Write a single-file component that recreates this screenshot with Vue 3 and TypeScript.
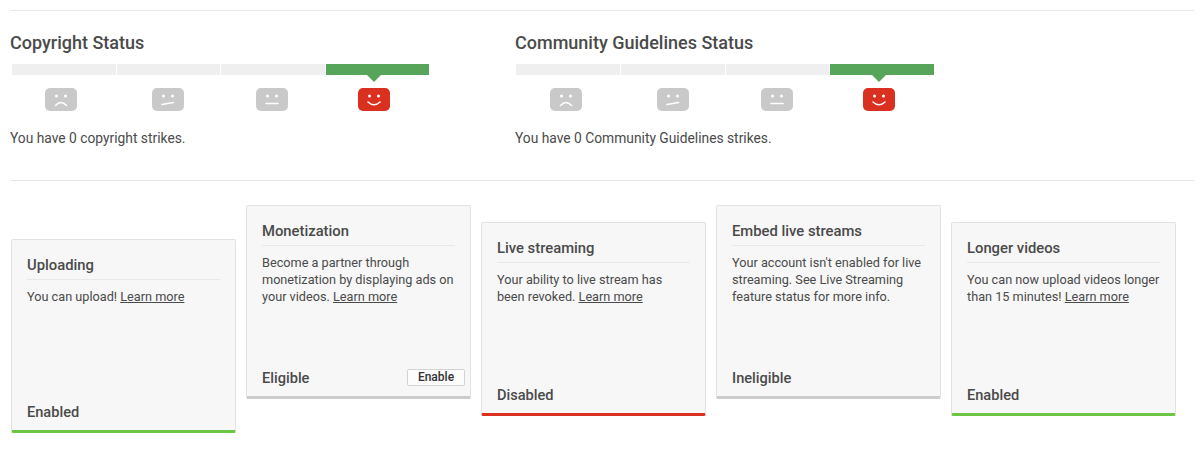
<script setup lang="ts">
interface Face { mouth: string; active?: boolean }
interface Panel { title: string; text: string; faces: Face[]; width: string }
interface Feature { title: string; text: string; link: boolean; status: string; tone: string; offset: string; action?: string }

const faces: Face[] = [
  { mouth: 'M10.5 17.5 Q16 11.5 21.5 17.5' },
  { mouth: 'M10 16.5 L21.5 14.5' },
  { mouth: 'M10 15.5 H22' },
  { mouth: 'M10 14 Q16 19.5 22 14', active: true },
]
const panels: Panel[] = [
  { title: 'Copyright Status', text: 'You have 0 copyright strikes.', faces, width: 'panel-a' },
  { title: 'Community Guidelines Status', text: 'You have 0 Community Guidelines strikes.', faces, width: 'panel-b' },
]
const features: Feature[] = [
  { title: 'Uploading', text: 'You can upload! ', link: true, status: 'Enabled', tone: 'green', offset: 'low' },
  { title: 'Monetization', text: 'Become a partner through monetization by displaying ads on your videos. ', link: true, status: 'Eligible', tone: 'gray', offset: 'high', action: 'Enable' },
  { title: 'Live streaming', text: 'Your ability to live stream has been revoked. ', link: true, status: 'Disabled', tone: 'red', offset: 'mid' },
  { title: 'Embed live streams', text: "Your account isn't enabled for live streaming. See Live Streaming feature status for more info.", link: false, status: 'Ineligible', tone: 'gray', offset: 'high' },
  { title: 'Longer videos', text: 'You can now upload videos longer than 15 minutes! ', link: true, status: 'Enabled', tone: 'green', offset: 'mid' },
]
</script>

<template>
  <main class="page">
    <section class="status-row">
      <div v-for="p in panels" :key="p.title" class="panel" :class="p.width">
        <h2 class="panel-title">{{ p.title }}</h2>
        <div class="meter">
          <div v-for="(f, i) in p.faces" :key="i" class="step" :class="[{ on: f.active }, 'pos-' + i]">
            <div class="bar"></div>
            <svg class="face" width="32" height="23" viewBox="0 0 32 23">
              <rect width="32" height="23" rx="5" :fill="f.active ? '#d9301f' : '#c9c9c9'" />
              <circle cx="11.5" cy="8" r="1.5" fill="#fff" />
              <circle cx="20.5" cy="8" r="1.5" fill="#fff" />
              <path :d="f.mouth" fill="none" stroke="#fff" stroke-width="1.6" stroke-linecap="round" />
            </svg>
          </div>
        </div>
        <p class="panel-text">{{ p.text }}</p>
      </div>
    </section>

    <section class="cards">
      <article v-for="c in features" :key="c.title" class="card" :class="[c.tone, c.offset]">
        <h3 class="card-title">{{ c.title }}</h3>
        <p class="card-text">{{ c.text }}<a v-if="c.link" class="learn">Learn more</a></p>
        <div class="card-foot">
          <span class="state">{{ c.status }}</span>
          <button v-if="c.action" class="enable" type="button">{{ c.action }}</button>
        </div>
      </article>
    </section>
  </main>
</template>

<style scoped>
.page {
  width: 1184px;
  margin-left: 10px;
  padding-top: 10px;
  font-family: Roboto, "Liberation Sans", sans-serif;
  color: #4a4a4a;
}
.status-row {
  display: flex;
  height: 171px;
  box-sizing: border-box;
  border-top: 1px solid #e6e6e6;
  border-bottom: 1px solid #e6e6e6;
}
.panel { box-sizing: border-box; width: 505px; }
.panel-title {
  margin: 20px 0 0;
  font-size: 18px;
  line-height: 24px;
  font-weight: 500;
  color: #4a4a4a;
}
.meter {
  display: flex;
  gap: 1px;
  margin: 9px 0 0 2px;
  width: 417px;
}
.panel-b .meter { margin-left: 1px; width: 418px; }
.step {
  position: relative;
  flex: 1;
  display: flex;
  flex-direction: column;
  align-items: center;
}
.bar { width: 100%; height: 11px; background: #efefef; }
.step.on .bar { background: #57a55a; }
.step.on::after {
  content: "";
  position: absolute;
  top: 11px;
  left: 50%;
  margin-left: -10px;
  border-left: 7px solid transparent;
  border-right: 7px solid transparent;
  border-top: 7px solid #57a55a;
}
.face { margin-top: 13px; display: block; }
.pos-0 .face { margin-right: 5px; }
.pos-1 .face { margin-right: 0; }
.pos-2 .face { margin-right: 2px; }
.pos-3 .face { margin-right: 6px; }
.panel-b .pos-0 .face { margin-right: 3px; }
.panel-b .pos-2 .face { margin-right: 0; }
.panel-text {
  margin: 17px 0 0;
  font-size: 13.8px;
  line-height: 20px;
  color: #4a4a4a;
}
.cards {
  display: flex;
  gap: 10px;
  margin: 24px 0 0 1px;
  align-items: flex-start;
}
.card {
  box-sizing: border-box;
  width: 225px;
  height: 194px;
  padding: 15px 15px 0;
  display: flex;
  flex-direction: column;
  background: #f7f7f7;
  border: 1px solid #e2e2e2;
  border-bottom-width: 3px;
  border-radius: 2px;
}
.card.low { margin-top: 34px; }
.card.mid { margin-top: 17px; }
.card.high { margin-top: 0; }
.card.green { border-bottom-color: #6cc644; }
.card.gray { border-bottom-color: #cccccc; }
.card.red { border-bottom-color: #d9301f; }
.card-title {
  margin: 0;
  padding-bottom: 3px;
  font-size: 14.8px;
  line-height: 21px;
  font-weight: 500;
  color: #4a4a4a;
  border-bottom: 1px solid #e8e8e8;
}
.card-text {
  margin: 8px 0 0;
  font-size: 12.7px;
  line-height: 17px;
  color: #4a4a4a;
}
.learn { text-decoration: underline; color: #4a4a4a; }
.card-foot {
  margin-top: auto;
  height: 28px;
  display: flex;
  justify-content: space-between;
  align-items: flex-start;
  margin-right: -10px;
}
.state {
  font-size: 14.6px;
  line-height: 21px;
  font-weight: 500;
  color: #4a4a4a;
}
.enable {
  width: 58px;
  height: 17px;
  margin-top: 1px;
  padding: 0;
  font-family: inherit;
  font-size: 12px;
  font-weight: 500;
  line-height: 15px;
  color: #333;
  background: #fcfcfc;
  border: 1px solid #d3d3d3;
  border-radius: 2px;
}
</style>
